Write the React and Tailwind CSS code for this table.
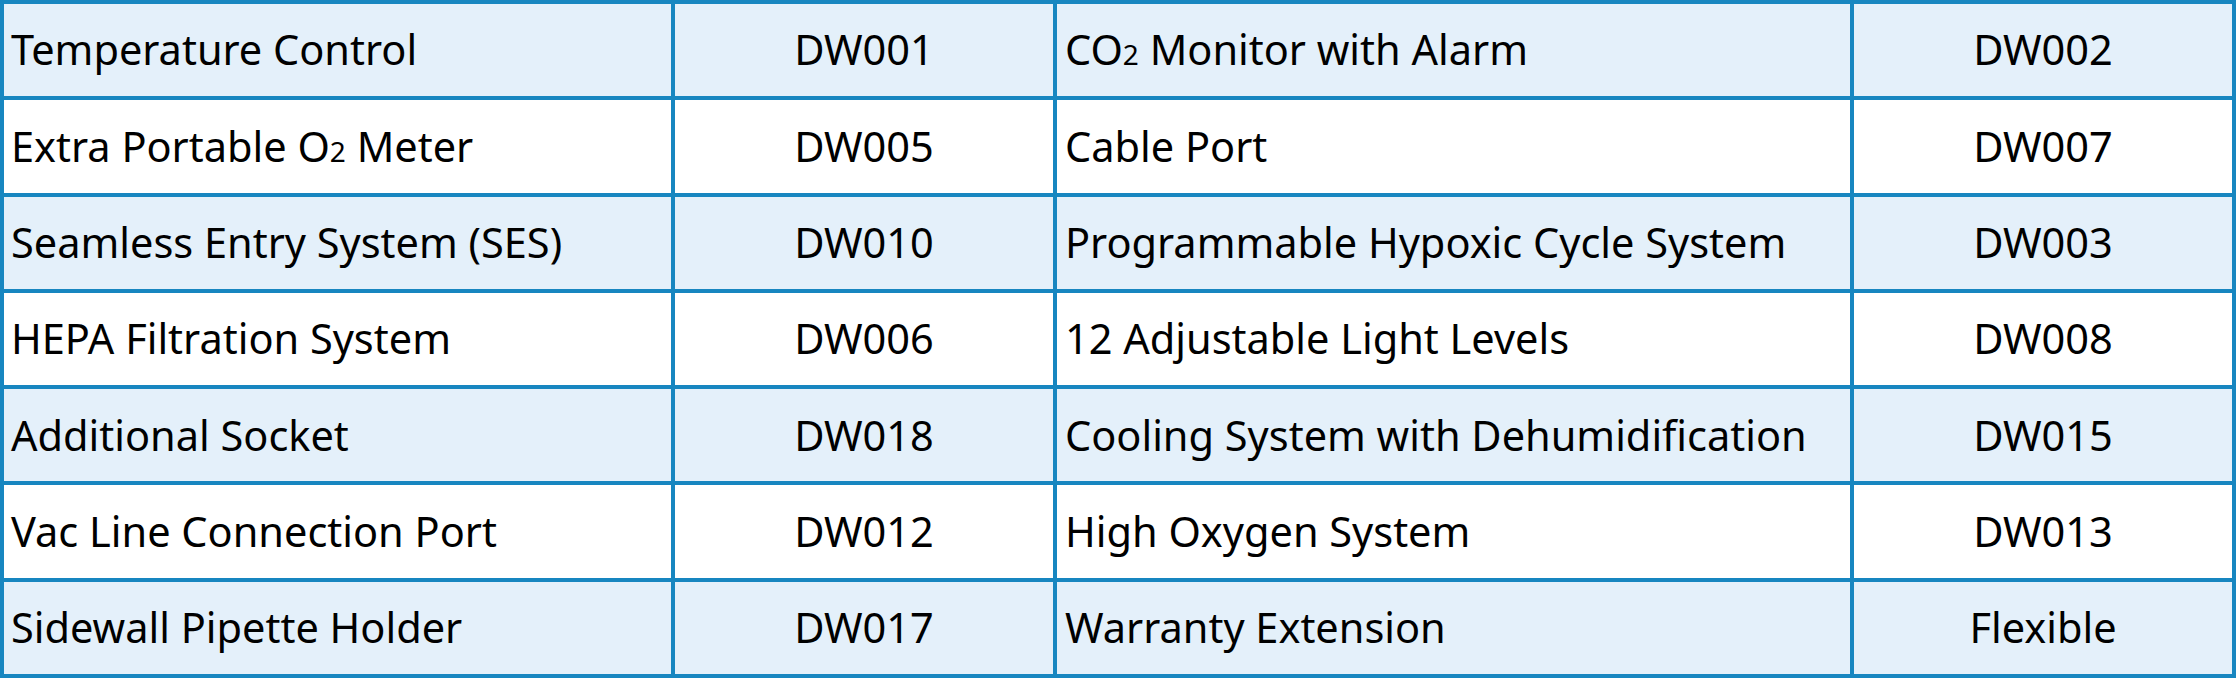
const rows = [
  [["Temperature Control"], "DW001", ["CO", "2", " Monitor with Alarm"], "DW002"],
  [["Extra Portable O", "2", " Meter"], "DW005", ["Cable Port"], "DW007"],
  [["Seamless Entry System (SES)"], "DW010", ["Programmable Hypoxic Cycle System"], "DW003"],
  [["HEPA Filtration System"], "DW006", ["12 Adjustable Light Levels"], "DW008"],
  [["Additional Socket"], "DW018", ["Cooling System with Dehumidification"], "DW015"],
  [["Vac Line Connection Port"], "DW012", ["High Oxygen System"], "DW013"],
  [["Sidewall Pipette Holder"], "DW017", ["Warranty Extension"], "Flexible"],
];

// 名称里的下标数字用小一号的字
const Label = ({ parts }) => (
  <span>
    {parts[0]}
    {parts[1] && <span className="text-[28px]">{parts[1]}</span>}
    {parts[2]}
  </span>
);

export default function App() {
  return (
    <div
      className="w-[2236px] h-[680px] bg-white text-black text-[41.5px] leading-none"
      style={{ fontFamily: '"Noto Sans", "Open Sans", sans-serif' }}
    >
      <div className="grid grid-cols-[667px_378px_793px_378px] grid-rows-7 gap-[4px] p-[4px] w-[2236px] h-[678px] bg-[#1786c0]">
        {rows.map((row, i) => {
          const bg = i % 2 === 0 ? "bg-[#e4f0fa]" : "bg-white";
          return [
            <div key={i + "a"} className={`${bg} flex items-center pl-[7px]`}>
              <Label parts={row[0]} />
            </div>,
            <div key={i + "b"} className={`${bg} flex items-center justify-center`}>
              {row[1]}
            </div>,
            <div key={i + "c"} className={`${bg} flex items-center pl-[8px]`}>
              <Label parts={row[2]} />
            </div>,
            <div key={i + "d"} className={`${bg} flex items-center justify-center`}>
              {row[3]}
            </div>,
          ];
        })}
      </div>
    </div>
  );
}
